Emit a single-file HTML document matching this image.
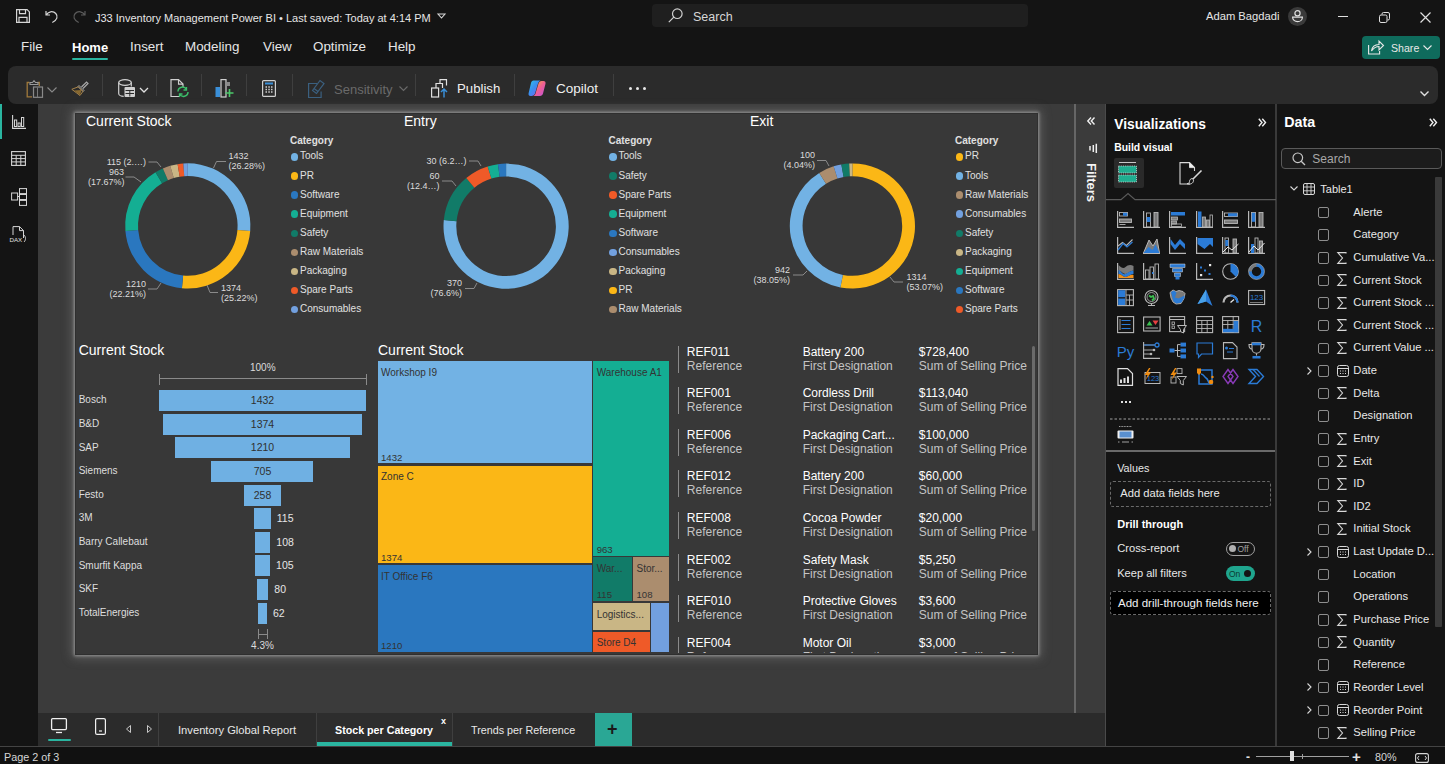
<!DOCTYPE html>
<html><head><meta charset="utf-8">
<style>
*{margin:0;padding:0;box-sizing:border-box}
html,body{width:1445px;height:764px;overflow:hidden;background:#141414;font-family:"Liberation Sans",sans-serif;color:#fff}
.a{position:absolute}
.t{position:absolute;white-space:nowrap;line-height:1}
svg{position:absolute;overflow:visible}
</style></head><body>
<div class="a" style="left:0px;top:0px;width:1445px;height:104px;background:#141414;"></div>
<svg style="left:16px;top:9px;" width="14" height="14" viewBox="0 0 14 14"><path d="M0.6 0.6h10.5l2.3 2.3v10.5h-12.8z M3.5 0.6v4h6v-4 M3 13.4v-5h8v5" fill="none" stroke="#d6d6d6" stroke-width="1.2"/></svg>
<svg style="left:45px;top:10px;" width="13" height="13" viewBox="0 0 13 13"><path d="M1 1v4h4 M1.2 5C3 1.5 8 0.5 10.8 3.5c2.5 2.7 1.5 6.5-3.5 9" fill="none" stroke="#d6d6d6" stroke-width="1.2"/></svg>
<svg style="left:73px;top:10px;" width="13" height="13" viewBox="0 0 13 13"><path d="M12 1v4h-4 M11.8 5C10 1.5 5 0.5 2.2 3.5c-2.5 2.7-1.5 6.5 3.5 9" fill="none" stroke="#5c5c5c" stroke-width="1.2"/></svg>
<div class="t" style="left:95px;top:13.3px;font-size:11px;color:#e6e6e6;font-weight:normal;">J33 Inventory Management Power BI &#8226; Last saved: Today at 4:14 PM</div>
<svg style="left:437px;top:13px;" width="9" height="6" viewBox="0 0 9 6"><path d="M1 1h7l-3.5 4z" fill="none" stroke="#d6d6d6" stroke-width="1.1"/></svg>
<div class="a" style="left:652px;top:4px;width:376px;height:23px;background:#1f1f1f;border-radius:4px"></div>
<svg style="left:668px;top:8px;" width="15" height="15" viewBox="0 0 15 15"><circle cx="9.3" cy="5.7" r="4.8" fill="none" stroke="#d0d0d0" stroke-width="1.2"/><path d="M5.8 9.2L0.8 14.2" stroke="#d0d0d0" stroke-width="1.2"/></svg>
<div class="t" style="left:693px;top:11.1px;font-size:12.5px;color:#d6d6d6;font-weight:normal;">Search</div>
<div class="t" style="left:1206px;top:10.9px;font-size:11.2px;color:#e6e6e6;font-weight:normal;">Adam Bagdadi</div>
<div class="a" style="left:1288px;top:7px;width:19px;height:19px;background:#3a3a3a;border-radius:50%"></div>
<svg style="left:1288px;top:7px;" width="19" height="19" viewBox="0 0 19 19"><circle cx="9.5" cy="6.2" r="2.6" fill="none" stroke="#e0e0e0" stroke-width="1.2"/><path d="M4.6 10.2h9.8c0 2.5-2.2 4.5-4.9 4.5s-4.9-2-4.9-4.5z" fill="none" stroke="#e0e0e0" stroke-width="1.2"/></svg>
<div class="a" style="left:1338px;top:16px;width:10px;height:1px;background:#e0e0e0;"></div>
<svg style="left:1379px;top:12px;" width="11" height="11" viewBox="0 0 11 11"><rect x="0.5" y="3" width="7.5" height="7.5" rx="1.5" fill="none" stroke="#e0e0e0"/><path d="M3 2.5v-0.5a1.5 1.5 0 0 1 1.5-1.5h4.5a1.5 1.5 0 0 1 1.5 1.5v4.5a1.5 1.5 0 0 1-1.5 1.5h-0.5" fill="none" stroke="#e0e0e0"/></svg>
<svg style="left:1420px;top:12px;" width="11" height="11" viewBox="0 0 11 11"><path d="M0.5 0.5l10 10M10.5 0.5l-10 10" stroke="#e0e0e0" stroke-width="1.2"/></svg>
<div class="t" style="left:21px;top:40.3px;font-size:13.4px;color:#e6e6e6;font-weight:normal;">File</div>
<div class="t" style="left:130px;top:40.3px;font-size:13.4px;color:#e6e6e6;font-weight:normal;">Insert</div>
<div class="t" style="left:185px;top:40.3px;font-size:13.4px;color:#e6e6e6;font-weight:normal;">Modeling</div>
<div class="t" style="left:263px;top:40.3px;font-size:13.4px;color:#e6e6e6;font-weight:normal;">View</div>
<div class="t" style="left:313px;top:40.3px;font-size:13.4px;color:#e6e6e6;font-weight:normal;">Optimize</div>
<div class="t" style="left:388px;top:40.3px;font-size:13.4px;color:#e6e6e6;font-weight:normal;">Help</div>
<div class="t" style="left:72px;top:40.5px;font-size:13px;color:#ffffff;font-weight:bold;">Home</div>
<div class="a" style="left:72px;top:58px;width:36px;height:2px;background:#2ab5a0;border-radius:1px"></div>
<div class="a" style="left:1362px;top:36px;width:78px;height:23px;background:#0f6b5c;border-radius:4px"></div>
<svg style="left:1368px;top:40px;" width="16" height="15" viewBox="0 0 16 15"><path d="M0.6 5v9h11v-3 M3.5 11c0.5-4 3.5-6.5 7.5-6.5v-3.5l4.5 4.5-4.5 4.5v-3.5c-3 0-5.5 1.5-7.5 4.5z" fill="none" stroke="#e8e8e8" stroke-width="1.1"/></svg>
<div class="t" style="left:1391px;top:42.5px;font-size:10.6px;color:#e8e8e8;font-weight:normal;">Share</div>
<svg style="left:1423px;top:45px;" width="9" height="5" viewBox="0 0 9 5"><path d="M0.5 0.5l4 4 4-4" fill="none" stroke="#e8e8e8" stroke-width="1.1"/></svg>
<div class="a" style="left:8px;top:66px;width:1430px;height:38px;background:#2b2b2b;border-radius:8px"></div>
<div class="a" style="left:102px;top:74px;width:1px;height:22px;background:#3f3f3f;"></div>
<div class="a" style="left:156px;top:74px;width:1px;height:22px;background:#3f3f3f;"></div>
<div class="a" style="left:201px;top:74px;width:1px;height:22px;background:#3f3f3f;"></div>
<div class="a" style="left:246px;top:74px;width:1px;height:22px;background:#3f3f3f;"></div>
<div class="a" style="left:292px;top:74px;width:1px;height:22px;background:#3f3f3f;"></div>
<div class="a" style="left:415px;top:74px;width:1px;height:22px;background:#3f3f3f;"></div>
<div class="a" style="left:514px;top:74px;width:1px;height:22px;background:#3f3f3f;"></div>
<div class="a" style="left:613px;top:74px;width:1px;height:22px;background:#3f3f3f;"></div>
<svg style="left:26px;top:80px;" width="18" height="18" viewBox="0 0 18 18"><path d="M3.5 2.5H1.2v14.3h4.8" fill="none" stroke="#a07a3c" stroke-width="1.3"/><path d="M11.5 2.5h1.8v3.5" fill="none" stroke="#a07a3c" stroke-width="1.3"/><path d="M4 4.5v-2h2.5l1.5-1.8 1.5 1.8h2.5v2z" fill="none" stroke="#9a9a9a" stroke-width="1.1"/><rect x="7.5" y="7" width="9" height="10.3" fill="none" stroke="#8a8a8a" stroke-width="1.2"/><path d="M11.5 7.5v9.5" stroke="#7a7a7a" stroke-width="1"/></svg>
<svg style="left:47px;top:87px;" width="10" height="6" viewBox="0 0 10 6"><path d="M0.5 0.5l4.5 4.5 4.5-4.5" fill="none" stroke="#8a8a8a" stroke-width="1.1"/></svg>
<svg style="left:71px;top:81px;" width="18" height="15" viewBox="0 0 18 15"><path d="M10.5 6L15.5 1l1.5 1.5-5 5" fill="none" stroke="#a8a8a8" stroke-width="1.2"/><path d="M8 4.5l5 5-1 1-5-5z" fill="none" stroke="#a8a8a8" stroke-width="1"/><path d="M0.8 8.3L7.3 5.8l4.7 4.5-3 4.2z" fill="none" stroke="#a8844a" stroke-width="1"/><path d="M3 9.5l7.5-0.5L9 14z" fill="#8a6a30"/></svg>
<svg style="left:118px;top:79px;" width="31" height="19" viewBox="0 0 31 19"><ellipse cx="7" cy="3.5" rx="6.3" ry="2.8" fill="none" stroke="#d0d0d0" stroke-width="1.2"/><path d="M0.7 3.5v11c0 1.6 2.5 2.8 5 2.8" fill="none" stroke="#d0d0d0" stroke-width="1.2"/><path d="M13.3 3.5v4" stroke="#d0d0d0" stroke-width="1.2"/><rect x="6.5" y="8" width="10.5" height="10" rx="1" fill="#d0d0d0"/><path d="M7.5 11.5h8.5M11.8 11.5v6M7.5 14.5h8.5" stroke="#2b2b2b" stroke-width="1"/><path d="M22 9l4 4 4-4" fill="none" stroke="#e0e0e0" stroke-width="1.3"/></svg>
<svg style="left:170px;top:79px;" width="19" height="19" viewBox="0 0 19 19"><path d="M9 17.5H1V0.6h7.5l4.5 4.5v3" fill="none" stroke="#d0d0d0" stroke-width="1.2"/><path d="M8.5 0.6v4.5h4.5" fill="none" stroke="#d0d0d0" stroke-width="1.1"/><path d="M8 12.5a4.5 4.5 0 0 1 8.5-2 M18 13a4.5 4.5 0 0 1-8.5 2" fill="none" stroke="#3bbf6a" stroke-width="1.5"/><path d="M16.5 8v3h-3 M9.5 18v-3h3" fill="none" stroke="#3bbf6a" stroke-width="1.3"/></svg>
<svg style="left:215px;top:79px;" width="19" height="19" viewBox="0 0 19 19"><rect x="0.5" y="8" width="4.5" height="10" fill="#3a8fd8"/><rect x="6" y="0.6" width="5" height="17.4" fill="none" stroke="#d0d0d0" stroke-width="1.2"/><rect x="12" y="3" width="3" height="4" fill="#8a8a8a"/><path d="M14.5 10v8M10.5 14h8" stroke="#4cc86a" stroke-width="1.6"/></svg>
<svg style="left:262px;top:80px;" width="14" height="17" viewBox="0 0 14 17"><rect x="0.6" y="0.6" width="12.8" height="15.8" rx="1" fill="none" stroke="#d0d0d0" stroke-width="1.2"/><rect x="3" y="2.5" width="8" height="2" fill="#3a8fd8"/><path d="M3.5 7h1.5M6.3 7h1.5M9 7h1.5M3.5 9.5h1.5M6.3 9.5h1.5M9 9.5h1.5M3.5 12h1.5M6.3 12h1.5M9 12h1.5" stroke="#d0d0d0" stroke-width="1.3"/></svg>
<svg style="left:308px;top:79px;" width="17" height="19" viewBox="0 0 17 19"><path d="M9 4.5H0.6v14h12.5v-6" fill="none" stroke="#3b6080" stroke-width="1.2"/><path d="M4.5 11.5l7.5-10 4 3-7.5 10z M6 9.5l4 3" fill="none" stroke="#3b6080" stroke-width="1.2"/></svg>
<div class="t" style="left:334px;top:82.5px;font-size:13px;color:#6a6a6a;font-weight:normal;">Sensitivity</div>
<svg style="left:399px;top:86px;" width="9" height="5" viewBox="0 0 9 5"><path d="M0.5 0.5l4 4 4-4" fill="none" stroke="#6a6a6a" stroke-width="1.1"/></svg>
<svg style="left:431px;top:79px;" width="18" height="19" viewBox="0 0 18 19"><rect x="0.6" y="9" width="7" height="9" fill="none" stroke="#e0e0e0" stroke-width="1.2"/><path d="M5 9V4.5h6.5V9 M9 4.5V0.6h6.5v6" fill="none" stroke="#e0e0e0" stroke-width="1.2"/><path d="M13 18.5v-8.5M10 13l3-3 3 3" fill="none" stroke="#3a8fd8" stroke-width="1.5"/></svg>
<div class="t" style="left:457px;top:82.4px;font-size:13.2px;color:#f0f0f0;font-weight:normal;">Publish</div>
<svg style="left:528px;top:79px;" width="19" height="19" viewBox="0 0 19 19"><defs><linearGradient id="cg1" x1="0" y1="0" x2="1" y2="1"><stop offset="0" stop-color="#2fc4e8"/><stop offset="0.45" stop-color="#3a8ef0"/><stop offset="1" stop-color="#8a5af0"/></linearGradient><linearGradient id="cg2" x1="0" y1="0" x2="1" y2="1"><stop offset="0" stop-color="#f0c030"/><stop offset="0.5" stop-color="#f06090"/><stop offset="1" stop-color="#c050e0"/></linearGradient></defs><path d="M5.5 1.5h7c-1.2 0.5-2 1.5-2.5 3L7 14.5c-0.5 1.5-1.8 2.5-3.5 2.5H2.5C1 17 0.2 15.8 0.6 14.3L3 4c0.4-1.5 1.2-2.5 2.5-2.5z" fill="url(#cg1)"/><path d="M13.5 2h2c1.5 0 2.4 1.2 2 2.7L15 14.5c-0.4 1.5-1.5 2.5-3 2.5H5c1.3-0.3 2.2-1.3 2.6-2.8L10.5 4.5C11 3 12 2 13.5 2z" fill="url(#cg2)"/></svg>
<div class="t" style="left:556px;top:82.2px;font-size:13.5px;color:#f0f0f0;font-weight:normal;">Copilot</div>
<div class="a" style="left:629px;top:86.5px;width:3px;height:3px;background:#e8e8e8;border-radius:50%"></div>
<div class="a" style="left:636px;top:86.5px;width:3px;height:3px;background:#e8e8e8;border-radius:50%"></div>
<div class="a" style="left:643px;top:86.5px;width:3px;height:3px;background:#e8e8e8;border-radius:50%"></div>
<svg style="left:1420px;top:91px;" width="9" height="6" viewBox="0 0 9 6"><path d="M0.5 0.5l4 4 4-4" fill="none" stroke="#e0e0e0" stroke-width="1.4"/></svg>
<div class="a" style="left:0px;top:104px;width:38px;height:642px;background:#141414;"></div>
<div class="a" style="left:0px;top:104px;width:2px;height:35px;background:#2ab5a0;"></div>
<svg style="left:12px;top:115px;" width="14" height="14" viewBox="0 0 14 14"><path d="M0.6 0v13.4H14" fill="none" stroke="#d6d6d6" stroke-width="1.1"/><rect x="2.5" y="5" width="2.2" height="6.5" fill="none" stroke="#d6d6d6" stroke-width="1"/><rect x="6" y="8" width="2.2" height="3.5" fill="none" stroke="#d6d6d6" stroke-width="1"/><rect x="9.5" y="2.5" width="2.2" height="9" fill="none" stroke="#d6d6d6" stroke-width="1"/></svg>
<svg style="left:11px;top:151px;" width="15" height="15" viewBox="0 0 15 15"><rect x="0.6" y="0.6" width="13.8" height="13.8" fill="none" stroke="#d6d6d6" stroke-width="1.1"/><path d="M0.6 4.3h13.8M0.6 7.6h13.8M0.6 10.9h13.8M5.2 4.3v10.1M9.8 4.3v10.1" stroke="#d6d6d6" stroke-width="1"/></svg>
<svg style="left:11px;top:188px;" width="16" height="18" viewBox="0 0 16 18"><rect x="0.6" y="5" width="6" height="7" fill="none" stroke="#d6d6d6" stroke-width="1"/><rect x="8.5" y="0.6" width="7" height="5" fill="none" stroke="#d6d6d6" stroke-width="1"/><rect x="8.5" y="6.5" width="7" height="5" fill="none" stroke="#d6d6d6" stroke-width="1"/><rect x="8.5" y="12.4" width="7" height="5" fill="none" stroke="#d6d6d6" stroke-width="1"/><path d="M6.6 8.5h2" stroke="#d6d6d6"/></svg>
<svg style="left:10px;top:226px;" width="17" height="17" viewBox="0 0 17 17"><path d="M3 9V0.6h6.5l4 4V12" fill="none" stroke="#d6d6d6" stroke-width="1"/><path d="M9.5 0.6v4h4" fill="none" stroke="#d6d6d6" stroke-width="1"/><path d="M14 9c2 2 2 5 0 7" fill="none" stroke="#d6d6d6" stroke-width="1"/></svg>
<div class="t" style="left:9.5px;top:236.9px;font-size:6.2px;color:#e0e0e0;font-weight:normal;">DAX</div>
<div class="a" style="left:38px;top:104px;width:1036px;height:609px;background:#3b3b3b;"></div>
<div class="a" style="left:75px;top:112.5px;width:963px;height:542.5px;background:#383838;border:1px solid #2f2f2f;box-shadow:0 0 3px 1px rgba(200,200,200,0.55),0 0 10px 3px rgba(160,160,160,0.35)"></div>
<div class="a" style="left:1074px;top:104px;width:2px;height:609px;background:#666666;"></div>
<div class="a" style="left:1076px;top:104px;width:29px;height:609px;background:#3b3b3b;"></div>
<div class="a" style="left:1105px;top:104px;width:1px;height:642px;background:#4a4a4a;"></div>
<svg style="left:1087px;top:117px;" width="8" height="8" viewBox="0 0 8 8"><path d="M4 0.5L0.8 4 4 7.5M7.5 0.5L4.3 4 7.5 7.5" fill="none" stroke="#f0f0f0" stroke-width="1.4"/></svg>
<svg style="left:1089px;top:144px;" width="9" height="9" viewBox="0 0 9 9"><path d="M1 2v4.6M4.3 0.9v7M7.3 -0.2v9.2" stroke="#f0f0f0" stroke-width="1.5"/></svg>
<div class="t" style="left:1091px;top:175.5px;font-size:13px;color:#f5f5f5;font-weight:bold;transform:translate(-50%,0) rotate(90deg);transform-origin:50% 50%">Filters</div>
<div class="a" style="left:38px;top:713px;width:1067px;height:33px;background:#2b2b2b;"></div>
<svg style="left:51px;top:718px;" width="16" height="16" viewBox="0 0 16 16"><rect x="0.6" y="0.6" width="14.8" height="11" rx="1" fill="none" stroke="#f0f0f0" stroke-width="1.3"/><path d="M5 14.5h6" stroke="#f0f0f0" stroke-width="1.3"/></svg>
<div class="a" style="left:48px;top:739px;width:23px;height:2px;background:#2ab5a0;border-radius:1px"></div>
<svg style="left:95px;top:718px;" width="11" height="17" viewBox="0 0 11 17"><rect x="0.6" y="0.6" width="9.8" height="15.8" rx="1.5" fill="none" stroke="#f0f0f0" stroke-width="1.2"/><path d="M4 13h3" stroke="#f0f0f0" stroke-width="1.2"/></svg>
<svg style="left:126px;top:725px;" width="5" height="8" viewBox="0 0 5 8"><path d="M4.5 0.5L0.5 4l4 3.5z" fill="none" stroke="#c8c8c8" stroke-width="1"/></svg>
<svg style="left:147px;top:725px;" width="5" height="8" viewBox="0 0 5 8"><path d="M0.5 0.5L4.5 4l-4 3.5z" fill="none" stroke="#c8c8c8" stroke-width="1"/></svg>
<div class="a" style="left:158px;top:713px;width:1px;height:33px;background:#3f3f3f;"></div>
<div class="t" style="left:178px;top:724.6px;font-size:11.2px;color:#e8e8e8;font-weight:normal;">Inventory Global Report</div>
<div class="a" style="left:316px;top:713px;width:1px;height:33px;background:#3f3f3f;"></div>
<div class="a" style="left:317px;top:713px;width:135px;height:33px;background:#2d2d2d;"></div>
<div class="t" style="left:335px;top:724.9px;font-size:10.7px;color:#ffffff;font-weight:bold;">Stock per Category</div>
<div class="t" style="left:441px;top:716.5px;font-size:9px;color:#ffffff;font-weight:bold;">x</div>
<div class="a" style="left:317px;top:742px;width:135px;height:4px;background:#2ab5a0;"></div>
<div class="a" style="left:452px;top:713px;width:1px;height:33px;background:#3f3f3f;"></div>
<div class="t" style="left:471px;top:724.8px;font-size:10.75px;color:#e8e8e8;font-weight:normal;">Trends per Reference</div>
<div class="a" style="left:595px;top:713px;width:37px;height:33px;background:#2aa795;"></div>
<div class="t" style="left:607px;top:719.5px;font-size:18px;color:#1a1a1a;font-weight:bold;">+</div>
<div class="t" style="left:86px;top:114.0px;font-size:14px;color:#ffffff;font-weight:normal;">Current Stock</div>
<svg style="left:0;top:0" width="1445" height="764" viewBox="0 0 1445 764"><path d="M187.80 163.30A62.6 62.6 0 0 1 250.20 230.93L237.44 229.90A49.8 49.8 0 0 0 187.80 176.10Z" fill="#72b2e4"/><path d="M250.20 230.93A62.6 62.6 0 0 1 181.93 288.22L183.13 275.48A49.8 49.8 0 0 0 237.44 229.90Z" fill="#fbb716"/><path d="M181.93 288.22A62.6 62.6 0 0 1 125.41 231.00L138.17 229.96A49.8 49.8 0 0 0 183.13 275.48Z" fill="#2a77bf"/><path d="M125.41 231.00A62.6 62.6 0 0 1 155.51 172.27L162.11 183.24A49.8 49.8 0 0 0 138.17 229.96Z" fill="#14ae93"/><path d="M155.51 172.27A62.6 62.6 0 0 1 162.88 168.47L167.98 180.21A49.8 49.8 0 0 0 162.11 183.24Z" fill="#117b68"/><path d="M162.88 168.47A62.6 62.6 0 0 1 170.21 165.82L173.81 178.11A49.8 49.8 0 0 0 167.98 180.21Z" fill="#ab8d6e"/><path d="M170.21 165.82A62.6 62.6 0 0 1 177.60 164.14L179.68 176.77A49.8 49.8 0 0 0 173.81 178.11Z" fill="#c9b685"/><path d="M177.60 164.14A62.6 62.6 0 0 1 183.33 163.46L184.24 176.23A49.8 49.8 0 0 0 179.68 176.77Z" fill="#ef5a28"/><path d="M183.33 163.46A62.6 62.6 0 0 1 187.80 163.30L187.80 176.10A49.8 49.8 0 0 0 184.24 176.23Z" fill="#72a0df"/></svg>
<div class="t" style="left:290px;top:135.6px;font-size:10px;color:#e0e0e0;font-weight:bold;">Category</div>
<div class="a" style="left:290.7px;top:153.1px;width:7.6px;height:7.6px;background:#72b2e4;border-radius:50%"></div>
<div class="t" style="left:300px;top:151.4px;font-size:10px;color:#e0e0e0;font-weight:normal;">Tools</div>
<div class="a" style="left:290.7px;top:172.2px;width:7.6px;height:7.6px;background:#fbb716;border-radius:50%"></div>
<div class="t" style="left:300px;top:170.5px;font-size:10px;color:#e0e0e0;font-weight:normal;">PR</div>
<div class="a" style="left:290.7px;top:191.3px;width:7.6px;height:7.6px;background:#2a77bf;border-radius:50%"></div>
<div class="t" style="left:300px;top:189.6px;font-size:10px;color:#e0e0e0;font-weight:normal;">Software</div>
<div class="a" style="left:290.7px;top:210.4px;width:7.6px;height:7.6px;background:#14ae93;border-radius:50%"></div>
<div class="t" style="left:300px;top:208.7px;font-size:10px;color:#e0e0e0;font-weight:normal;">Equipment</div>
<div class="a" style="left:290.7px;top:229.5px;width:7.6px;height:7.6px;background:#117b68;border-radius:50%"></div>
<div class="t" style="left:300px;top:227.8px;font-size:10px;color:#e0e0e0;font-weight:normal;">Safety</div>
<div class="a" style="left:290.7px;top:248.6px;width:7.6px;height:7.6px;background:#ab8d6e;border-radius:50%"></div>
<div class="t" style="left:300px;top:246.9px;font-size:10px;color:#e0e0e0;font-weight:normal;">Raw Materials</div>
<div class="a" style="left:290.7px;top:267.7px;width:7.6px;height:7.6px;background:#c9b685;border-radius:50%"></div>
<div class="t" style="left:300px;top:266.0px;font-size:10px;color:#e0e0e0;font-weight:normal;">Packaging</div>
<div class="a" style="left:290.7px;top:286.8px;width:7.6px;height:7.6px;background:#ef5a28;border-radius:50%"></div>
<div class="t" style="left:300px;top:285.1px;font-size:10px;color:#e0e0e0;font-weight:normal;">Spare Parts</div>
<div class="a" style="left:290.7px;top:305.90000000000003px;width:7.6px;height:7.6px;background:#72a0df;border-radius:50%"></div>
<div class="t" style="left:300px;top:304.2px;font-size:10px;color:#e0e0e0;font-weight:normal;">Consumables</div>
<div class="t" style="left:228.5px;top:152.0px;font-size:9px;color:#dcdcdc;font-weight:normal;">1432</div>
<div class="t" style="left:228.5px;top:162.0px;font-size:9px;color:#dcdcdc;font-weight:normal;">(26.28%)</div>
<svg style="left:0;top:0" width="1445" height="764"><path d="M213.5 168 L216.5 161.5 L226 161.5" fill="none" stroke="#8a8a8a" stroke-width="1"/></svg>
<div class="t" style="right:1299px;top:158.2px;font-size:9px;color:#dcdcdc;font-weight:normal;text-align:right;">115 (2.…)</div>
<svg style="left:0;top:0" width="1445" height="764"><path d="M148.5 162 L157 162 L161 167" fill="none" stroke="#8a8a8a" stroke-width="1"/></svg>
<div class="t" style="right:1321px;top:168.0px;font-size:9px;color:#dcdcdc;font-weight:normal;text-align:right;">963</div>
<div class="t" style="right:1320.5px;top:177.8px;font-size:9px;color:#dcdcdc;font-weight:normal;text-align:right;">(17.67%)</div>
<svg style="left:0;top:0" width="1445" height="764"><path d="M125.5 177 L134 177 L141 182" fill="none" stroke="#8a8a8a" stroke-width="1"/></svg>
<div class="t" style="right:1299px;top:280.0px;font-size:9px;color:#dcdcdc;font-weight:normal;text-align:right;">1210</div>
<div class="t" style="right:1299px;top:290.0px;font-size:9px;color:#dcdcdc;font-weight:normal;text-align:right;">(22.21%)</div>
<svg style="left:0;top:0" width="1445" height="764"><path d="M148 289 L157 289 L161 283" fill="none" stroke="#8a8a8a" stroke-width="1"/></svg>
<div class="t" style="left:221px;top:283.5px;font-size:9px;color:#dcdcdc;font-weight:normal;">1374</div>
<div class="t" style="left:221px;top:293.5px;font-size:9px;color:#dcdcdc;font-weight:normal;">(25.22%)</div>
<svg style="left:0;top:0" width="1445" height="764"><path d="M207 285 L210 292.5 L218 292.5" fill="none" stroke="#8a8a8a" stroke-width="1"/></svg>
<div class="t" style="left:404px;top:114.0px;font-size:14px;color:#ffffff;font-weight:normal;">Entry</div>
<svg style="left:0;top:0" width="1445" height="764" viewBox="0 0 1445 764"><path d="M506.10 163.60A62.6 62.6 0 1 1 443.82 219.90L456.55 221.19A49.8 49.8 0 1 0 506.10 176.40Z" fill="#72b2e4"/><path d="M443.82 219.90A62.6 62.6 0 0 1 466.28 177.90L474.42 187.77A49.8 49.8 0 0 0 456.55 221.19Z" fill="#117b68"/><path d="M466.28 177.90A62.6 62.6 0 0 1 487.65 166.38L491.42 178.61A49.8 49.8 0 0 0 474.42 187.77Z" fill="#ef5a28"/><path d="M487.65 166.38A62.6 62.6 0 0 1 497.98 164.13L499.64 176.82A49.8 49.8 0 0 0 491.42 178.61Z" fill="#14ae93"/><path d="M497.98 164.13A62.6 62.6 0 0 1 506.10 163.60L506.10 176.40A49.8 49.8 0 0 0 499.64 176.82Z" fill="#2a77bf"/></svg>
<div class="t" style="left:608.5px;top:135.6px;font-size:10px;color:#e0e0e0;font-weight:bold;">Category</div>
<div class="a" style="left:609.2px;top:153.1px;width:7.6px;height:7.6px;background:#72b2e4;border-radius:50%"></div>
<div class="t" style="left:618.5px;top:151.4px;font-size:10px;color:#e0e0e0;font-weight:normal;">Tools</div>
<div class="a" style="left:609.2px;top:172.2px;width:7.6px;height:7.6px;background:#117b68;border-radius:50%"></div>
<div class="t" style="left:618.5px;top:170.5px;font-size:10px;color:#e0e0e0;font-weight:normal;">Safety</div>
<div class="a" style="left:609.2px;top:191.3px;width:7.6px;height:7.6px;background:#ef5a28;border-radius:50%"></div>
<div class="t" style="left:618.5px;top:189.6px;font-size:10px;color:#e0e0e0;font-weight:normal;">Spare Parts</div>
<div class="a" style="left:609.2px;top:210.4px;width:7.6px;height:7.6px;background:#14ae93;border-radius:50%"></div>
<div class="t" style="left:618.5px;top:208.7px;font-size:10px;color:#e0e0e0;font-weight:normal;">Equipment</div>
<div class="a" style="left:609.2px;top:229.5px;width:7.6px;height:7.6px;background:#2a77bf;border-radius:50%"></div>
<div class="t" style="left:618.5px;top:227.8px;font-size:10px;color:#e0e0e0;font-weight:normal;">Software</div>
<div class="a" style="left:609.2px;top:248.6px;width:7.6px;height:7.6px;background:#72a0df;border-radius:50%"></div>
<div class="t" style="left:618.5px;top:246.9px;font-size:10px;color:#e0e0e0;font-weight:normal;">Consumables</div>
<div class="a" style="left:609.2px;top:267.7px;width:7.6px;height:7.6px;background:#c9b685;border-radius:50%"></div>
<div class="t" style="left:618.5px;top:266.0px;font-size:10px;color:#e0e0e0;font-weight:normal;">Packaging</div>
<div class="a" style="left:609.2px;top:286.8px;width:7.6px;height:7.6px;background:#fbb716;border-radius:50%"></div>
<div class="t" style="left:618.5px;top:285.1px;font-size:10px;color:#e0e0e0;font-weight:normal;">PR</div>
<div class="a" style="left:609.2px;top:305.90000000000003px;width:7.6px;height:7.6px;background:#ab8d6e;border-radius:50%"></div>
<div class="t" style="left:618.5px;top:304.2px;font-size:10px;color:#e0e0e0;font-weight:normal;">Raw Materials</div>
<div class="t" style="right:978.5px;top:156.8px;font-size:9px;color:#dcdcdc;font-weight:normal;text-align:right;">30 (6.2…)</div>
<svg style="left:0;top:0" width="1445" height="764"><path d="M469 161 L478 161 L481 166" fill="none" stroke="#8a8a8a" stroke-width="1"/></svg>
<div class="t" style="right:1005.5px;top:171.5px;font-size:9px;color:#dcdcdc;font-weight:normal;text-align:right;">60</div>
<div class="t" style="right:1005.5px;top:182.2px;font-size:9px;color:#dcdcdc;font-weight:normal;text-align:right;">(12.4…)</div>
<svg style="left:0;top:0" width="1445" height="764"><path d="M442 181 L452 181 L456 186" fill="none" stroke="#8a8a8a" stroke-width="1"/></svg>
<div class="t" style="right:983px;top:279.2px;font-size:9px;color:#dcdcdc;font-weight:normal;text-align:right;">370</div>
<div class="t" style="right:983px;top:289.2px;font-size:9px;color:#dcdcdc;font-weight:normal;text-align:right;">(76.6%)</div>
<svg style="left:0;top:0" width="1445" height="764"><path d="M465 288.5 L474 288.5 L477 283" fill="none" stroke="#8a8a8a" stroke-width="1"/></svg>
<div class="t" style="left:750px;top:114.0px;font-size:14px;color:#ffffff;font-weight:normal;">Exit</div>
<svg style="left:0;top:0" width="1445" height="764" viewBox="0 0 1445 764"><path d="M852.40 163.40A62.6 62.6 0 1 1 840.40 287.44L842.85 274.88A49.8 49.8 0 1 0 852.40 176.20Z" fill="#fbb716"/><path d="M840.40 287.44A62.6 62.6 0 0 1 819.24 172.90L826.02 183.76A49.8 49.8 0 0 0 842.85 274.88Z" fill="#72b2e4"/><path d="M819.24 172.90A62.6 62.6 0 0 1 833.63 166.28L837.47 178.49A49.8 49.8 0 0 0 826.02 183.76Z" fill="#ab8d6e"/><path d="M833.63 166.28A62.6 62.6 0 0 1 841.34 164.39L843.60 176.98A49.8 49.8 0 0 0 837.47 178.49Z" fill="#72a0df"/><path d="M841.34 164.39A62.6 62.6 0 0 1 849.22 163.48L849.87 176.26A49.8 49.8 0 0 0 843.60 176.98Z" fill="#117b68"/><path d="M849.22 163.48A62.6 62.6 0 0 1 852.40 163.40L852.40 176.20A49.8 49.8 0 0 0 849.87 176.26Z" fill="#c9b685"/></svg>
<div class="t" style="left:955px;top:135.6px;font-size:10px;color:#e0e0e0;font-weight:bold;">Category</div>
<div class="a" style="left:955.7px;top:153.1px;width:7.6px;height:7.6px;background:#fbb716;border-radius:50%"></div>
<div class="t" style="left:965px;top:151.4px;font-size:10px;color:#e0e0e0;font-weight:normal;">PR</div>
<div class="a" style="left:955.7px;top:172.2px;width:7.6px;height:7.6px;background:#72b2e4;border-radius:50%"></div>
<div class="t" style="left:965px;top:170.5px;font-size:10px;color:#e0e0e0;font-weight:normal;">Tools</div>
<div class="a" style="left:955.7px;top:191.3px;width:7.6px;height:7.6px;background:#ab8d6e;border-radius:50%"></div>
<div class="t" style="left:965px;top:189.6px;font-size:10px;color:#e0e0e0;font-weight:normal;">Raw Materials</div>
<div class="a" style="left:955.7px;top:210.4px;width:7.6px;height:7.6px;background:#72a0df;border-radius:50%"></div>
<div class="t" style="left:965px;top:208.7px;font-size:10px;color:#e0e0e0;font-weight:normal;">Consumables</div>
<div class="a" style="left:955.7px;top:229.5px;width:7.6px;height:7.6px;background:#117b68;border-radius:50%"></div>
<div class="t" style="left:965px;top:227.8px;font-size:10px;color:#e0e0e0;font-weight:normal;">Safety</div>
<div class="a" style="left:955.7px;top:248.6px;width:7.6px;height:7.6px;background:#c9b685;border-radius:50%"></div>
<div class="t" style="left:965px;top:246.9px;font-size:10px;color:#e0e0e0;font-weight:normal;">Packaging</div>
<div class="a" style="left:955.7px;top:267.7px;width:7.6px;height:7.6px;background:#14ae93;border-radius:50%"></div>
<div class="t" style="left:965px;top:266.0px;font-size:10px;color:#e0e0e0;font-weight:normal;">Equipment</div>
<div class="a" style="left:955.7px;top:286.8px;width:7.6px;height:7.6px;background:#2a77bf;border-radius:50%"></div>
<div class="t" style="left:965px;top:285.1px;font-size:10px;color:#e0e0e0;font-weight:normal;">Software</div>
<div class="a" style="left:955.7px;top:305.90000000000003px;width:7.6px;height:7.6px;background:#ef5a28;border-radius:50%"></div>
<div class="t" style="left:965px;top:304.2px;font-size:10px;color:#e0e0e0;font-weight:normal;">Spare Parts</div>
<div class="t" style="right:630px;top:150.8px;font-size:9px;color:#dcdcdc;font-weight:normal;text-align:right;">100</div>
<div class="t" style="right:630px;top:161.0px;font-size:9px;color:#dcdcdc;font-weight:normal;text-align:right;">(4.04%)</div>
<svg style="left:0;top:0" width="1445" height="764"><path d="M817 160.5 L826 160.5 L829 166" fill="none" stroke="#8a8a8a" stroke-width="1"/></svg>
<div class="t" style="right:655px;top:265.5px;font-size:9px;color:#dcdcdc;font-weight:normal;text-align:right;">942</div>
<div class="t" style="right:655px;top:276.1px;font-size:9px;color:#dcdcdc;font-weight:normal;text-align:right;">(38.05%)</div>
<svg style="left:0;top:0" width="1445" height="764"><path d="M793 275 L803 275 L807 271" fill="none" stroke="#8a8a8a" stroke-width="1"/></svg>
<div class="t" style="left:906.5px;top:272.5px;font-size:9px;color:#dcdcdc;font-weight:normal;">1314</div>
<div class="t" style="left:906.5px;top:282.7px;font-size:9px;color:#dcdcdc;font-weight:normal;">(53.07%)</div>
<svg style="left:0;top:0" width="1445" height="764"><path d="M890 277 L894 282 L903 282" fill="none" stroke="#8a8a8a" stroke-width="1"/></svg>
<div class="t" style="left:78.7px;top:343.0px;font-size:14px;color:#ffffff;font-weight:normal;">Current Stock</div>
<div class="t" style="left:250px;top:363.0px;font-size:10px;color:#dcdcdc;font-weight:normal;width:25px;text-align:center">100%</div>
<div class="a" style="left:158.5px;top:378.3px;width:208px;height:1.2px;background:#8a8a8a;"></div>
<div class="a" style="left:158.5px;top:373.5px;width:1.2px;height:11px;background:#8a8a8a;"></div>
<div class="a" style="left:365.5px;top:373.5px;width:1.2px;height:11px;background:#8a8a8a;"></div>
<div class="a" style="left:158.8px;top:390.2px;width:207.4px;height:21px;background:#6fb0e3;"></div>
<div class="t" style="left:78.7px;top:395.4px;font-size:10px;color:#dedede;font-weight:normal;">Bosch</div>
<div class="t" style="left:232.5px;top:395.1px;width:60px;text-align:center;font-size:10.5px;color:#303030">1432</div>
<div class="a" style="left:163.0px;top:413.8px;width:199.0px;height:21px;background:#6fb0e3;"></div>
<div class="t" style="left:78.7px;top:419.0px;font-size:10px;color:#dedede;font-weight:normal;">B&D</div>
<div class="t" style="left:232.5px;top:418.8px;width:60px;text-align:center;font-size:10.5px;color:#303030">1374</div>
<div class="a" style="left:174.9px;top:437.4px;width:175.2px;height:21px;background:#6fb0e3;"></div>
<div class="t" style="left:78.7px;top:442.6px;font-size:10px;color:#dedede;font-weight:normal;">SAP</div>
<div class="t" style="left:232.5px;top:442.3px;width:60px;text-align:center;font-size:10.5px;color:#303030">1210</div>
<div class="a" style="left:211.4px;top:461.0px;width:102.1px;height:21px;background:#6fb0e3;"></div>
<div class="t" style="left:78.7px;top:466.2px;font-size:10px;color:#dedede;font-weight:normal;">Siemens</div>
<div class="t" style="left:232.5px;top:465.9px;width:60px;text-align:center;font-size:10.5px;color:#303030">705</div>
<div class="a" style="left:243.8px;top:484.6px;width:37.4px;height:21px;background:#6fb0e3;"></div>
<div class="t" style="left:78.7px;top:489.8px;font-size:10px;color:#dedede;font-weight:normal;">Festo</div>
<div class="t" style="left:232.5px;top:489.6px;width:60px;text-align:center;font-size:10.5px;color:#303030">258</div>
<div class="a" style="left:254.2px;top:508.2px;width:16.7px;height:21px;background:#6fb0e3;"></div>
<div class="t" style="left:78.7px;top:513.4px;font-size:10px;color:#dedede;font-weight:normal;">3M</div>
<div class="t" style="left:276.8px;top:513.1px;font-size:10.5px;color:#e6e6e6;font-weight:normal;">115</div>
<div class="a" style="left:254.7px;top:531.8px;width:15.6px;height:21px;background:#6fb0e3;"></div>
<div class="t" style="left:78.7px;top:537.0px;font-size:10px;color:#dedede;font-weight:normal;">Barry Callebaut</div>
<div class="t" style="left:276.3px;top:536.8px;font-size:10.5px;color:#e6e6e6;font-weight:normal;">108</div>
<div class="a" style="left:254.9px;top:555.4px;width:15.2px;height:21px;background:#6fb0e3;"></div>
<div class="t" style="left:78.7px;top:560.6px;font-size:10px;color:#dedede;font-weight:normal;">Smurfit Kappa</div>
<div class="t" style="left:276.1px;top:560.4px;font-size:10.5px;color:#e6e6e6;font-weight:normal;">105</div>
<div class="a" style="left:256.7px;top:579.0px;width:11.6px;height:21px;background:#6fb0e3;"></div>
<div class="t" style="left:78.7px;top:584.2px;font-size:10px;color:#dedede;font-weight:normal;">SKF</div>
<div class="t" style="left:274.3px;top:584.0px;font-size:10.5px;color:#e6e6e6;font-weight:normal;">80</div>
<div class="a" style="left:258.0px;top:602.6px;width:9.0px;height:21px;background:#6fb0e3;"></div>
<div class="t" style="left:78.7px;top:607.8px;font-size:10px;color:#dedede;font-weight:normal;">TotalEnergies</div>
<div class="t" style="left:273.0px;top:607.6px;font-size:10.5px;color:#e6e6e6;font-weight:normal;">62</div>
<div class="a" style="left:257.5px;top:629px;width:1px;height:10px;background:#8a8a8a;"></div>
<div class="a" style="left:266.5px;top:629px;width:1px;height:10px;background:#8a8a8a;"></div>
<div class="a" style="left:257.5px;top:634px;width:10px;height:1px;background:#8a8a8a;"></div>
<div class="t" style="left:242.5px;top:640.5px;width:40px;text-align:center;font-size:10px;color:#dcdcdc">4.3%</div>
<div class="t" style="left:378px;top:343.0px;font-size:14px;color:#ffffff;font-weight:normal;">Current Stock</div>
<div class="a" style="left:377.5px;top:361.2px;width:214px;height:102.3px;background:#72b2e4;"></div>
<div class="t" style="left:381.0px;top:368.0px;font-size:10px;color:#333333;font-weight:normal;">Workshop I9</div>
<div class="t" style="left:381.0px;top:452.7px;font-size:9.6px;color:#333333;font-weight:normal;">1432</div>
<div class="a" style="left:377.5px;top:465.6px;width:214px;height:97.9px;background:#fbb716;"></div>
<div class="t" style="left:381.0px;top:472.4px;font-size:10px;color:#333333;font-weight:normal;">Zone C</div>
<div class="t" style="left:381.0px;top:552.7px;font-size:9.6px;color:#333333;font-weight:normal;">1374</div>
<div class="a" style="left:377.5px;top:565px;width:214px;height:86.8px;background:#2a77bf;"></div>
<div class="t" style="left:381.0px;top:571.8px;font-size:10px;color:#333333;font-weight:normal;">IT Office F6</div>
<div class="t" style="left:381.0px;top:641.0px;font-size:9.6px;color:#333333;font-weight:normal;">1210</div>
<div class="a" style="left:593.2px;top:361px;width:76px;height:194.7px;background:#14ae93;"></div>
<div class="t" style="left:596.7px;top:367.8px;font-size:10px;color:#333333;font-weight:normal;">Warehouse A1</div>
<div class="t" style="left:596.7px;top:544.9px;font-size:9.6px;color:#333333;font-weight:normal;">963</div>
<div class="a" style="left:593.2px;top:557.2px;width:38.6px;height:43.8px;background:#117b68;"></div>
<div class="t" style="left:596.7px;top:564.0px;font-size:10px;color:#333333;font-weight:normal;">War...</div>
<div class="t" style="left:596.7px;top:590.2px;font-size:9.6px;color:#333333;font-weight:normal;">115</div>
<div class="a" style="left:633px;top:557.2px;width:36.2px;height:43.8px;background:#ab8d6e;"></div>
<div class="t" style="left:636.5px;top:564.0px;font-size:10px;color:#333333;font-weight:normal;">Stor...</div>
<div class="t" style="left:636.5px;top:590.2px;font-size:9.6px;color:#333333;font-weight:normal;">108</div>
<div class="a" style="left:593.2px;top:602.8px;width:56.8px;height:27.4px;background:#c9b685;"></div>
<div class="t" style="left:596.7px;top:609.6px;font-size:10px;color:#333333;font-weight:normal;">Logistics...</div>
<div class="a" style="left:593.2px;top:631.5px;width:56.8px;height:20.3px;background:#ef5a28;"></div>
<div class="t" style="left:596.7px;top:638.3px;font-size:10px;color:#333333;font-weight:normal;">Store D4</div>
<div class="a" style="left:651px;top:602.8px;width:18.2px;height:49px;background:#72a0df;"></div>
<div class="a" style="left:670px;top:340px;width:368px;height:312.5px;overflow:hidden">
<div class="a" style="left:8px;top:5.5px;width:1px;height:27px;background:#8a8a8a"></div>
<div class="t" style="left:16.8px;top:5.5px;font-size:12px;color:#ffffff">REF011</div>
<div class="t" style="left:16.8px;top:19.5px;font-size:12px;color:#c4c4c4">Reference</div>
<div class="t" style="left:132.7px;top:5.5px;font-size:12px;color:#ffffff">Battery 200</div>
<div class="t" style="left:132.7px;top:19.5px;font-size:12px;color:#c4c4c4">First Designation</div>
<div class="t" style="left:248.8px;top:5.5px;font-size:12px;color:#ffffff">$728,400</div>
<div class="t" style="left:248.8px;top:19.5px;font-size:12px;color:#c4c4c4">Sum of Selling Price</div>
<div class="a" style="left:8px;top:47.1px;width:1px;height:27px;background:#8a8a8a"></div>
<div class="t" style="left:16.8px;top:47.1px;font-size:12px;color:#ffffff">REF001</div>
<div class="t" style="left:16.8px;top:61.1px;font-size:12px;color:#c4c4c4">Reference</div>
<div class="t" style="left:132.7px;top:47.1px;font-size:12px;color:#ffffff">Cordless Drill</div>
<div class="t" style="left:132.7px;top:61.1px;font-size:12px;color:#c4c4c4">First Designation</div>
<div class="t" style="left:248.8px;top:47.1px;font-size:12px;color:#ffffff">$113,040</div>
<div class="t" style="left:248.8px;top:61.1px;font-size:12px;color:#c4c4c4">Sum of Selling Price</div>
<div class="a" style="left:8px;top:88.8px;width:1px;height:27px;background:#8a8a8a"></div>
<div class="t" style="left:16.8px;top:88.8px;font-size:12px;color:#ffffff">REF006</div>
<div class="t" style="left:16.8px;top:102.8px;font-size:12px;color:#c4c4c4">Reference</div>
<div class="t" style="left:132.7px;top:88.8px;font-size:12px;color:#ffffff">Packaging Cart...</div>
<div class="t" style="left:132.7px;top:102.8px;font-size:12px;color:#c4c4c4">First Designation</div>
<div class="t" style="left:248.8px;top:88.8px;font-size:12px;color:#ffffff">$100,000</div>
<div class="t" style="left:248.8px;top:102.8px;font-size:12px;color:#c4c4c4">Sum of Selling Price</div>
<div class="a" style="left:8px;top:130.4px;width:1px;height:27px;background:#8a8a8a"></div>
<div class="t" style="left:16.8px;top:130.4px;font-size:12px;color:#ffffff">REF012</div>
<div class="t" style="left:16.8px;top:144.4px;font-size:12px;color:#c4c4c4">Reference</div>
<div class="t" style="left:132.7px;top:130.4px;font-size:12px;color:#ffffff">Battery 200</div>
<div class="t" style="left:132.7px;top:144.4px;font-size:12px;color:#c4c4c4">First Designation</div>
<div class="t" style="left:248.8px;top:130.4px;font-size:12px;color:#ffffff">$60,000</div>
<div class="t" style="left:248.8px;top:144.4px;font-size:12px;color:#c4c4c4">Sum of Selling Price</div>
<div class="a" style="left:8px;top:172.1px;width:1px;height:27px;background:#8a8a8a"></div>
<div class="t" style="left:16.8px;top:172.1px;font-size:12px;color:#ffffff">REF008</div>
<div class="t" style="left:16.8px;top:186.1px;font-size:12px;color:#c4c4c4">Reference</div>
<div class="t" style="left:132.7px;top:172.1px;font-size:12px;color:#ffffff">Cocoa Powder</div>
<div class="t" style="left:132.7px;top:186.1px;font-size:12px;color:#c4c4c4">First Designation</div>
<div class="t" style="left:248.8px;top:172.1px;font-size:12px;color:#ffffff">$20,000</div>
<div class="t" style="left:248.8px;top:186.1px;font-size:12px;color:#c4c4c4">Sum of Selling Price</div>
<div class="a" style="left:8px;top:213.8px;width:1px;height:27px;background:#8a8a8a"></div>
<div class="t" style="left:16.8px;top:213.8px;font-size:12px;color:#ffffff">REF002</div>
<div class="t" style="left:16.8px;top:227.8px;font-size:12px;color:#c4c4c4">Reference</div>
<div class="t" style="left:132.7px;top:213.8px;font-size:12px;color:#ffffff">Safety Mask</div>
<div class="t" style="left:132.7px;top:227.8px;font-size:12px;color:#c4c4c4">First Designation</div>
<div class="t" style="left:248.8px;top:213.8px;font-size:12px;color:#ffffff">$5,250</div>
<div class="t" style="left:248.8px;top:227.8px;font-size:12px;color:#c4c4c4">Sum of Selling Price</div>
<div class="a" style="left:8px;top:255.4px;width:1px;height:27px;background:#8a8a8a"></div>
<div class="t" style="left:16.8px;top:255.4px;font-size:12px;color:#ffffff">REF010</div>
<div class="t" style="left:16.8px;top:269.4px;font-size:12px;color:#c4c4c4">Reference</div>
<div class="t" style="left:132.7px;top:255.4px;font-size:12px;color:#ffffff">Protective Gloves</div>
<div class="t" style="left:132.7px;top:269.4px;font-size:12px;color:#c4c4c4">First Designation</div>
<div class="t" style="left:248.8px;top:255.4px;font-size:12px;color:#ffffff">$3,600</div>
<div class="t" style="left:248.8px;top:269.4px;font-size:12px;color:#c4c4c4">Sum of Selling Price</div>
<div class="a" style="left:8px;top:297.0px;width:1px;height:27px;background:#8a8a8a"></div>
<div class="t" style="left:16.8px;top:297.0px;font-size:12px;color:#ffffff">REF004</div>
<div class="t" style="left:16.8px;top:311.0px;font-size:12px;color:#c4c4c4">Reference</div>
<div class="t" style="left:132.7px;top:297.0px;font-size:12px;color:#ffffff">Motor Oil</div>
<div class="t" style="left:132.7px;top:311.0px;font-size:12px;color:#c4c4c4">First Designation</div>
<div class="t" style="left:248.8px;top:297.0px;font-size:12px;color:#ffffff">$3,000</div>
<div class="t" style="left:248.8px;top:311.0px;font-size:12px;color:#c4c4c4">Sum of Selling Price</div>
</div>
<div class="a" style="left:1031.5px;top:345.5px;width:3.5px;height:185px;background:#6a6a6a;border-radius:2px"></div>
<div class="a" style="left:1106px;top:104px;width:170px;height:642px;background:#141414;"></div>
<div class="a" style="left:1275px;top:104px;width:2px;height:642px;background:#3a3a3a;"></div>
<div class="t" style="left:1114.2px;top:117.7px;font-size:13.8px;color:#ffffff;font-weight:bold;">Visualizations</div>
<svg style="left:1258px;top:118px;" width="9" height="9" viewBox="0 0 9 9"><path d="M0.8 0.8L4 4.5 0.8 8.2M4.3 0.8L7.5 4.5 4.3 8.2" fill="none" stroke="#f0f0f0" stroke-width="1.4"/></svg>
<div class="t" style="left:1114.2px;top:143.3px;font-size:10.4px;color:#ffffff;font-weight:bold;">Build visual</div>
<div class="a" style="left:1114px;top:158px;width:30px;height:30px;background:#2a2a2a;border-radius:2px"></div>
<svg style="left:1117px;top:161px;" width="24" height="24" viewBox="0 0 24 24"><path d="M2 1.5h17" stroke="#c8c8c8" stroke-width="1"/><rect x="1.5" y="5" width="18" height="7" fill="#1fae90" stroke="#d0d0d0" stroke-width="0.8" stroke-dasharray="1.2 1"/><rect x="1.5" y="14" width="18" height="7" fill="#1fae90" stroke="#d0d0d0" stroke-width="0.8" stroke-dasharray="1.2 1"/></svg>
<svg style="left:1179px;top:162px;" width="24" height="23" viewBox="0 0 24 23"><path d="M11 22H1V0.6h9.5l5 5V9" fill="none" stroke="#d8d8d8" stroke-width="1.1"/><path d="M10.5 0.6v5h5" fill="#f0f0f0" stroke="#d8d8d8" stroke-width="1"/><path d="M22.5 8.5L14 17" stroke="#d8d8d8" stroke-width="1.6"/><path d="M13.5 16.5c-2 0-3 1.5-3 3s-1 2-2.5 2.2c3 1 6.5 0 6.5-3.5z" fill="none" stroke="#d8d8d8" stroke-width="1"/></svg>
<svg style="left:1106px;top:190px;" width="170" height="12" viewBox="0 0 170 12"><path d="M0 9.6H15L22 3.5 29 9.6H170" fill="none" stroke="#5a5a5a" stroke-width="1.2"/></svg>
<svg style="left:1116.5px;top:210.8px;" width="17" height="17" viewBox="0 0 17 17"><path d="M0.6 0v16.4H17" fill="none" stroke="#b8b8b8" stroke-width="1.2"/><rect x="2.5" y="1.5" width="8" height="3.5" fill="none" stroke="#b8b8b8" stroke-width="0.9"/><rect x="6" y="1.8" width="4.3" height="3" fill="#2b7bd6"/><rect x="2.5" y="8" width="12" height="3.5" fill="#7a7a7a" stroke="#b8b8b8" stroke-width="0.9"/><path d="M2.5 13.5h6" stroke="#b8b8b8" stroke-width="0.9"/></svg>
<svg style="left:1142.8px;top:210.8px;" width="17" height="17" viewBox="0 0 17 17"><path d="M0 16.4H17" stroke="#b8b8b8" stroke-width="1.2"/><path d="M0.6 0v16.4" stroke="#b8b8b8" stroke-width="1.2"/><rect x="3.5" y="2" width="4" height="14" fill="none" stroke="#b8b8b8" stroke-width="0.9"/><rect x="3.8" y="6" width="3.4" height="5" fill="#2b7bd6"/><rect x="11" y="1.5" width="4" height="14.5" fill="#7a7a7a" stroke="#b8b8b8" stroke-width="0.9"/></svg>
<svg style="left:1169px;top:210.8px;" width="17" height="17" viewBox="0 0 17 17"><path d="M0.6 0v16.4H17" fill="none" stroke="#b8b8b8" stroke-width="1.2"/><rect x="2" y="1" width="14" height="3.5" fill="#2b7bd6"/><rect x="2.5" y="6" width="6" height="3" fill="#7a7a7a" stroke="#b8b8b8" stroke-width="0.8"/><rect x="2.5" y="10" width="5" height="3" fill="#7a7a7a" stroke="#b8b8b8" stroke-width="0.8"/><rect x="2.5" y="13" width="10" height="2.5" fill="none" stroke="#b8b8b8" stroke-width="0.8"/></svg>
<svg style="left:1195.7px;top:210.8px;" width="17" height="17" viewBox="0 0 17 17"><path d="M0 16.4H17" stroke="#b8b8b8" stroke-width="1.2"/><path d="M0.6 0v16.4" stroke="#b8b8b8" stroke-width="1.2"/><rect x="2" y="0.5" width="3.5" height="15.5" fill="#2b7bd6"/><rect x="6.5" y="6" width="3" height="10" fill="#7a7a7a" stroke="#b8b8b8" stroke-width="0.8"/><rect x="10.5" y="9" width="3" height="7" fill="#7a7a7a" stroke="#b8b8b8" stroke-width="0.8"/><rect x="14" y="4" width="2.5" height="12" fill="none" stroke="#b8b8b8" stroke-width="0.8"/></svg>
<svg style="left:1222px;top:210.8px;" width="17" height="17" viewBox="0 0 17 17"><path d="M0.6 0v16.4H17" fill="none" stroke="#b8b8b8" stroke-width="1.2"/><rect x="2.5" y="2" width="13" height="3.5" fill="none" stroke="#b8b8b8" stroke-width="0.9"/><rect x="6" y="2.3" width="9.3" height="3" fill="#2b7bd6"/><rect x="2.5" y="9" width="13" height="3.5" fill="#7a7a7a" stroke="#b8b8b8" stroke-width="0.9"/></svg>
<svg style="left:1248.2px;top:210.8px;" width="17" height="17" viewBox="0 0 17 17"><path d="M0 16.4H17" stroke="#b8b8b8" stroke-width="1.2"/><path d="M0.6 0v16.4" stroke="#b8b8b8" stroke-width="1.2"/><rect x="3.5" y="1.5" width="4" height="14.5" fill="none" stroke="#b8b8b8" stroke-width="0.9"/><rect x="3.8" y="1.8" width="3.4" height="9" fill="#2b7bd6"/><rect x="11" y="1.5" width="4" height="14.5" fill="#7a7a7a" stroke="#b8b8b8" stroke-width="0.9"/></svg>
<svg style="left:1116.5px;top:236.7px;" width="17" height="17" viewBox="0 0 17 17"><path d="M0.6 0v16.4H17" fill="none" stroke="#b8b8b8" stroke-width="1.2"/><path d="M1 9l4.5-3.5 4 3 6-6" fill="none" stroke="#b8b8b8" stroke-width="1.1"/><path d="M1 13l5-6.5 4 3.5 5.5-5" fill="none" stroke="#2b7bd6" stroke-width="1.3"/></svg>
<svg style="left:1142.8px;top:236.7px;" width="17" height="17" viewBox="0 0 17 17"><path d="M0 16.4H17" stroke="#b8b8b8" stroke-width="1.2"/><path d="M0.5 16L6 3l4 6 4-7 2.5 14z" fill="#7a7a7a" stroke="#b8b8b8" stroke-width="1"/><path d="M0.5 16L5.5 10l4 3 3-5.5 4 8.5z" fill="#2b7bd6"/></svg>
<svg style="left:1169px;top:236.7px;" width="17" height="17" viewBox="0 0 17 17"><path d="M0.6 0v16.4H17" fill="none" stroke="#b8b8b8" stroke-width="1.2"/><path d="M1.5 2l4.5 6 5-6 5 5v5l-5-5-5 6-4.5-6z" fill="#2b7bd6"/></svg>
<svg style="left:1195.7px;top:236.7px;" width="17" height="17" viewBox="0 0 17 17"><path d="M0.6 0v16.4H17" fill="none" stroke="#b8b8b8" stroke-width="1.2"/><path d="M1.5 1h15.5v9l-3-3-5.5 5-7-5z" fill="#2b7bd6"/></svg>
<svg style="left:1222px;top:236.7px;" width="17" height="17" viewBox="0 0 17 17"><path d="M0 16.4H17" stroke="#b8b8b8" stroke-width="1.2"/><path d="M0.6 0v16.4" stroke="#b8b8b8" stroke-width="1.2"/><rect x="3" y="1" width="3.5" height="15" fill="none" stroke="#b8b8b8" stroke-width="0.9"/><rect x="3.3" y="3" width="2.9" height="6" fill="#2b7bd6"/><rect x="11" y="2" width="3.5" height="14" fill="#7a7a7a" stroke="#b8b8b8" stroke-width="0.9"/><path d="M1 15l5-5 4 3 6.5-6" fill="none" stroke="#e8e8e8" stroke-width="1"/></svg>
<svg style="left:1248.2px;top:236.7px;" width="17" height="17" viewBox="0 0 17 17"><path d="M0 16.4H17" stroke="#b8b8b8" stroke-width="1.2"/><path d="M0.6 0v16.4" stroke="#b8b8b8" stroke-width="1.2"/><rect x="3" y="7" width="3" height="9" fill="#2b7bd6"/><rect x="7" y="1" width="3" height="15" fill="none" stroke="#b8b8b8" stroke-width="0.9"/><rect x="11.5" y="4" width="3" height="12" fill="#7a7a7a" stroke="#b8b8b8" stroke-width="0.9"/><path d="M1 15l5-6 4 4 6.5-7" fill="none" stroke="#e8e8e8" stroke-width="1"/></svg>
<svg style="left:1116.5px;top:263.2px;" width="17" height="17" viewBox="0 0 17 17"><path d="M0.6 0v16.4H17" fill="none" stroke="#b8b8b8" stroke-width="1.2"/><path d="M1.5 2c3 3 5 4 7 2s5-3 8-1v5c-3-1-5 3-8 3s-5-4-7-3z" fill="#7a7a7a"/><path d="M1.5 7c3 1 4 5 7 4s5-4 8-3v3c-3 0-5 3-8 3s-4-3-7-3z" fill="#2b7bd6"/><path d="M1.5 11c3 0 4 3 7 3s5-3 8-2v3H1.5z" fill="#f0901a"/></svg>
<svg style="left:1142.8px;top:263.2px;" width="17" height="17" viewBox="0 0 17 17"><path d="M0 16.4H17" stroke="#b8b8b8" stroke-width="1.2"/><path d="M0.6 0v16.4" stroke="#b8b8b8" stroke-width="1.2"/><rect x="2.5" y="7" width="3.5" height="9" fill="none" stroke="#b8b8b8" stroke-width="0.9"/><rect x="7" y="4" width="3.5" height="12" fill="none" stroke="#b8b8b8" stroke-width="0.9"/><path d="M9 10h1.5" stroke="#2b7bd6" stroke-width="2"/><rect x="12" y="1" width="3.5" height="15" fill="none" stroke="#b8b8b8" stroke-width="0.9"/></svg>
<svg style="left:1169px;top:263.2px;" width="17" height="17" viewBox="0 0 17 17"><path d="M1 1h15v3.5H1z M3.5 5.5h10V9h-10z M5.5 10h6v3.5h-6z" fill="#2b7bd6" stroke="#e0e0e0" stroke-width="0.5"/><path d="M6.5 13.5h4v3h-4z" fill="#2b7bd6"/></svg>
<svg style="left:1195.7px;top:263.2px;" width="17" height="17" viewBox="0 0 17 17"><path d="M0.6 0v16.4H17" fill="none" stroke="#b8b8b8" stroke-width="1.2"/><rect x="4" y="3.5" width="2" height="2" fill="#2b7bd6"/><rect x="8" y="6.5" width="2" height="2" fill="#2b7bd6"/><rect x="13" y="1" width="2.2" height="2.2" fill="#e8e8e8"/><rect x="4" y="11" width="2.2" height="2.2" fill="#e8e8e8"/><rect x="12.5" y="10" width="2" height="2" fill="#2b7bd6"/></svg>
<svg style="left:1222px;top:263.2px;" width="17" height="17" viewBox="0 0 17 17"><circle cx="8.5" cy="8.5" r="7.8" fill="none" stroke="#b8b8b8" stroke-width="1.1"/><path d="M8.5 8.5V0.7a7.8 7.8 0 0 1 5.5 13.3z" fill="#2b7bd6"/></svg>
<svg style="left:1248.2px;top:263.2px;" width="17" height="17" viewBox="0 0 17 17"><circle cx="8.5" cy="8.5" r="6.3" fill="none" stroke="#2b7bd6" stroke-width="3.2"/><path d="M2.2 8.5A6.3 6.3 0 0 1 8.5 2.2" fill="none" stroke="#7a7a7a" stroke-width="3.2"/><circle cx="8.5" cy="8.5" r="8" fill="none" stroke="#b8b8b8" stroke-width="0.6"/></svg>
<svg style="left:1116.5px;top:289.2px;" width="17" height="17" viewBox="0 0 17 17"><rect x="0.6" y="0.6" width="15.8" height="16" fill="none" stroke="#b8b8b8" stroke-width="1.1"/><rect x="1.2" y="1.2" width="7" height="7" fill="#2b7bd6"/><rect x="1.2" y="9.5" width="7" height="6.5" fill="#2b7bd6"/><path d="M9 0.6v16M9 6h7.4M12.5 6v10.6M9 11h7.4" stroke="#b8b8b8" stroke-width="0.9"/></svg>
<svg style="left:1142.8px;top:289.2px;" width="17" height="17" viewBox="0 0 17 17"><circle cx="8.5" cy="8" r="6.5" fill="none" stroke="#b8b8b8" stroke-width="1.1"/><circle cx="8.5" cy="8" r="4.5" fill="#1a1a1a" stroke="#b8b8b8" stroke-width="0.8"/><path d="M6 6.5l2 1.5 2-1 1 2.5-2 2" fill="none" stroke="#3cc050" stroke-width="1.8"/><path d="M5 16.5h7M8.5 14.5v2" stroke="#b8b8b8" stroke-width="1.1"/></svg>
<svg style="left:1169px;top:289.2px;" width="17" height="17" viewBox="0 0 17 17"><path d="M1 3.5l3-2.5 3 1.5 3-1 4 1 2 2-1 5-3 5-5 0.5-3-2-2-4z" fill="#7a7a7a" stroke="#b8b8b8" stroke-width="0.9"/><path d="M2 3l3-1.5 2.5 2-1.5 5 3.5 1 6-3v2l-3 5-5 1-3-2z" fill="#2b7bd6"/></svg>
<svg style="left:1195.7px;top:289.2px;" width="17" height="17" viewBox="0 0 17 17"><path d="M10 0.5L16.5 17 10 12.5 1.5 15z" fill="#2b7bd6"/><path d="M10 0.5L10 12.5 1.5 15z" fill="#48a0e8"/></svg>
<svg style="left:1222px;top:289.2px;" width="17" height="17" viewBox="0 0 17 17"><path d="M1.5 13.5a7 7 0 0 1 14 0" fill="none" stroke="#b8b8b8" stroke-width="2.2"/><path d="M8.5 6.5a7 7 0 0 1 7 7" fill="none" stroke="#2b7bd6" stroke-width="2.2"/><path d="M8.5 13.5l3.5-3" stroke="#e8e8e8" stroke-width="1.3"/></svg>
<svg style="left:1248.2px;top:289.2px;" width="17" height="17" viewBox="0 0 17 17"><rect x="0.6" y="1.5" width="16" height="14" fill="none" stroke="#b8b8b8" stroke-width="1.1"/><text x="8.6" y="11.3" font-size="8" fill="#2b7bd6" text-anchor="middle" font-family="Liberation Sans">123</text><path d="M2 13.5h13" stroke="#7a7a7a"/></svg>
<svg style="left:1116.5px;top:315.6px;" width="17" height="17" viewBox="0 0 17 17"><rect x="0.6" y="0.6" width="16" height="16" fill="none" stroke="#b8b8b8" stroke-width="1.1"/><path d="M4.5 4.5h9M4.5 8.5h9M4.5 12.5h9" stroke="#2b7bd6" stroke-width="1.2"/><path d="M3 3v11" stroke="#b8b8b8" stroke-width="0.8"/></svg>
<svg style="left:1142.8px;top:315.6px;" width="17" height="17" viewBox="0 0 17 17"><rect x="0.6" y="1" width="16.5" height="14" fill="none" stroke="#b8b8b8" stroke-width="1.1"/><path d="M3.5 9.5l3-4.5 3 4.5z" fill="#3cc050"/><path d="M9.5 4.5h6l-3 4.5z" fill="#e84040"/><path d="M2.5 12h12.5" stroke="#b8b8b8" stroke-width="0.9"/></svg>
<svg style="left:1169px;top:315.6px;" width="17" height="17" viewBox="0 0 17 17"><rect x="0.6" y="0.6" width="15" height="15" fill="none" stroke="#b8b8b8" stroke-width="1.1"/><path d="M0.6 3.5h15" stroke="#b8b8b8"/><rect x="3" y="6" width="2.5" height="2.5" fill="none" stroke="#b8b8b8" stroke-width="0.8"/><rect x="3" y="10" width="2.5" height="2.5" fill="none" stroke="#b8b8b8" stroke-width="0.8"/><path d="M8.5 9.5h9l-3 4v3.5l-3-1.5v-2z" fill="#141414" stroke="#b8b8b8" stroke-width="1"/></svg>
<svg style="left:1195.7px;top:315.6px;" width="17" height="17" viewBox="0 0 17 17"><rect x="0.6" y="0.6" width="16" height="16" fill="none" stroke="#b8b8b8" stroke-width="1.1"/><path d="M0.6 4.5h16M0.6 8.5h16M0.6 12.5h16M5.8 4.5v12M11.2 4.5v12" stroke="#b8b8b8" stroke-width="0.9"/></svg>
<svg style="left:1222px;top:315.6px;" width="17" height="17" viewBox="0 0 17 17"><rect x="0.6" y="0.6" width="16" height="16" fill="none" stroke="#b8b8b8" stroke-width="1.1"/><path d="M0.6 4.5h16M0.6 8.5h16M5.8 4.5v12M11.2 0.6v16" stroke="#b8b8b8" stroke-width="0.9"/><rect x="11.6" y="5" width="4.6" height="11.2" fill="#2b7bd6"/><rect x="1" y="12.8" width="15.2" height="3.4" fill="#2b7bd6"/></svg>
<svg style="left:1248.2px;top:315.6px;" width="17" height="17" viewBox="0 0 17 17"><text x="8.5" y="15.5" font-size="16" fill="#2b7bd6" text-anchor="middle" font-family="Liberation Sans">R</text></svg>
<svg style="left:1116.5px;top:341.7px;" width="17" height="17" viewBox="0 0 17 17"><text x="8.5" y="15" font-size="15" fill="#2b7bd6" text-anchor="middle" font-family="Liberation Sans">Py</text></svg>
<svg style="left:1142.8px;top:341.7px;" width="17" height="17" viewBox="0 0 17 17"><path d="M0.6 0v16.4H17" fill="none" stroke="#b8b8b8" stroke-width="1.1"/><path d="M1 3h11M1 8h9M1 12h6" stroke="#b8b8b8" stroke-width="0.9"/><path d="M1 3h11" stroke="#2b7bd6" stroke-width="1"/><circle cx="14" cy="3" r="2" fill="none" stroke="#2b7bd6" stroke-width="1.3"/><circle cx="11" cy="8" r="1.3" fill="#b8b8b8"/><circle cx="8" cy="12" r="1.3" fill="#b8b8b8"/></svg>
<svg style="left:1169px;top:341.7px;" width="17" height="17" viewBox="0 0 17 17"><rect x="0.5" y="6.5" width="5" height="4" fill="#2b7bd6"/><rect x="11.5" y="0.6" width="5.5" height="4" fill="#2b7bd6"/><rect x="11.5" y="6.5" width="5.5" height="4" fill="#2b7bd6"/><rect x="11.5" y="12.4" width="5.5" height="4" fill="#2b7bd6"/><path d="M5.5 8.5h3M8.5 2.6v11.8M8.5 2.6h3M8.5 8.5h3M8.5 14.4h3" fill="none" stroke="#b8b8b8" stroke-width="1"/></svg>
<svg style="left:1195.7px;top:341.7px;" width="17" height="17" viewBox="0 0 17 17"><path d="M1 1h15.5v11H5.5l-3 3.5V12H1z" fill="none" stroke="#2b7bd6" stroke-width="1.2"/></svg>
<svg style="left:1222px;top:341.7px;" width="17" height="17" viewBox="0 0 17 17"><path d="M1.5 0.6h9l4.5 4.5v11.5H1.5z" fill="none" stroke="#b8b8b8" stroke-width="1.1"/><circle cx="4.5" cy="6" r="1.5" fill="#2b7bd6"/><path d="M7 6.5h5M5 10h6" stroke="#2b7bd6" stroke-width="1"/></svg>
<svg style="left:1248.2px;top:341.7px;" width="17" height="17" viewBox="0 0 17 17"><path d="M4 0.8h9v6a4.5 4.5 0 0 1-9 0z" fill="none" stroke="#b8b8b8" stroke-width="1.1"/><path d="M4 0.8h9v2.5H4z" fill="#2b7bd6"/><path d="M4 2.5H1c0 3 1 4.5 3 4.5M13 2.5h3c0 3-1 4.5-3 4.5M8.5 11.5v2" fill="none" stroke="#b8b8b8" stroke-width="1.1"/><path d="M4.5 14h8v2.5h-8z" fill="#2b7bd6"/></svg>
<svg style="left:1116.5px;top:367.8px;" width="17" height="17" viewBox="0 0 17 17"><path d="M1 0.6h9.5l5 5v11.8H1z" fill="none" stroke="#e0e0e0" stroke-width="1.2"/><path d="M4 15v-3.5M7.5 15v-5M11 15v-6.5" stroke="#e0e0e0" stroke-width="2"/></svg>
<svg style="left:1142.8px;top:367.8px;" width="17" height="17" viewBox="0 0 17 17"><rect x="2" y="4.5" width="15" height="11" fill="none" stroke="#b8b8b8" stroke-width="1"/><text x="10" y="13" font-size="7.5" fill="#2b7bd6" text-anchor="middle" font-family="Liberation Sans">123</text><path d="M6 0L1.5 7h3l-2 5L8 4.5H5l2.5-4.5z" fill="#f08c10"/></svg>
<svg style="left:1169px;top:367.8px;" width="17" height="17" viewBox="0 0 17 17"><rect x="8" y="0.6" width="5" height="5" fill="none" stroke="#b8b8b8" stroke-width="0.9"/><rect x="2" y="9" width="5" height="6" fill="none" stroke="#b8b8b8" stroke-width="0.9"/><path d="M8 8.5h9.5l-3.2 4v4.5l-3-1.5v-3z" fill="#141414" stroke="#b8b8b8" stroke-width="1"/><path d="M6 0L1.5 7h3l-2 5L8 4.5H5l2.5-4.5z" fill="#f08c10"/></svg>
<svg style="left:1195.7px;top:367.8px;" width="17" height="17" viewBox="0 0 17 17"><path d="M3 2h13v14H3z" fill="none" stroke="#2b7bd6" stroke-width="1.5"/><path d="M5 6c3 0 3 3 5 4s2 3 3 5" fill="none" stroke="#2b7bd6" stroke-width="1.6"/><path d="M1 0.5h4v4.5l-2 2-2-2z" fill="#f08c10"/><circle cx="15" cy="14" r="2.3" fill="#f08c10"/><circle cx="16.5" cy="9" r="1.2" fill="#f08c10"/></svg>
<svg style="left:1222px;top:367.8px;" width="17" height="17" viewBox="0 0 17 17"><path d="M6 1.5L1 8.5l5 7 5-7z M11 1.5L6 8.5l5 7 5-7z" fill="none" stroke="#8a3ab8" stroke-width="1.4"/></svg>
<svg style="left:1248.2px;top:367.8px;" width="17" height="17" viewBox="0 0 17 17"><path d="M1 1.5h8l6.5 7-6.5 7H1l6.5-7z" fill="none" stroke="#2b7bd6" stroke-width="1.4"/><path d="M5 1.5l6.5 7" stroke="#2b7bd6" stroke-width="1.2"/></svg>
<div class="a" style="left:1121px;top:401px;width:2px;height:2px;background:#e0e0e0;"></div>
<div class="a" style="left:1125px;top:401px;width:2px;height:2px;background:#e0e0e0;"></div>
<div class="a" style="left:1129px;top:401px;width:2px;height:2px;background:#e0e0e0;"></div>
<svg style="left:1110px;top:418px;" width="161" height="2" viewBox="0 0 161 2"><path d="M0 1H161" stroke="#a0a0a0" stroke-width="1" stroke-dasharray="2.5 2"/></svg>
<svg style="left:1116.5px;top:426px;" width="17" height="17" viewBox="0 0 17 17"><path d="M2 0.5h13" stroke="#a0a0a0" stroke-dasharray="1 0.6"/><rect x="0.5" y="4.5" width="16" height="8" rx="1" fill="#f0f0f0"/><rect x="2.5" y="5.5" width="12" height="6" fill="#5a90d0"/><path d="M1 16h1.5M5 16h7M14.5 16h1.5" stroke="#a0a0a0"/></svg>
<div class="a" style="left:1106px;top:450px;width:169px;height:1.6px;background:#6a6a6a;"></div>
<div class="t" style="left:1117.2px;top:462.6px;font-size:10.8px;color:#e8e8e8;font-weight:normal;">Values</div>
<div class="a" style="left:1110px;top:481px;width:160.5px;height:25.5px;background:transparent;border:1px dashed #6a6a6a;border-radius:3px"></div>
<div class="t" style="left:1120.3px;top:488.0px;font-size:11.2px;color:#e8e8e8;font-weight:normal;">Add data fields here</div>
<div class="t" style="left:1117.2px;top:518.5px;font-size:11px;color:#ffffff;font-weight:bold;">Drill through</div>
<div class="t" style="left:1117.2px;top:542.7px;font-size:11.2px;color:#e8e8e8;font-weight:normal;">Cross-report</div>
<div class="a" style="left:1225.5px;top:541.5px;width:29.5px;height:14.5px;background:transparent;border:1px solid #a0a0a0;border-radius:8px"></div>
<div class="a" style="left:1229px;top:545.3px;width:7px;height:7px;background:#b0b0b0;border-radius:50%"></div>
<div class="t" style="left:1237.5px;top:544.5px;font-size:8.5px;color:#a0a0a0;font-weight:normal;">Off</div>
<div class="t" style="left:1117.2px;top:567.7px;font-size:11.1px;color:#e8e8e8;font-weight:normal;">Keep all filters</div>
<div class="a" style="left:1225.5px;top:566px;width:29.5px;height:15px;background:#1fa58e;border-radius:8px"></div>
<div class="t" style="left:1229px;top:569.5px;font-size:8.5px;color:#0a3a32;font-weight:normal;">On</div>
<div class="a" style="left:1244px;top:570px;width:7px;height:7px;background:#141414;border-radius:50%"></div>
<div class="a" style="left:1110px;top:591px;width:160.5px;height:24px;background:#000000;border:1px dashed #6a6a6a;border-radius:3px"></div>
<div class="t" style="left:1118px;top:597.5px;font-size:11.5px;color:#f0f0f0;font-weight:normal;">Add drill-through fields here</div>
<div class="a" style="left:1277px;top:104px;width:168px;height:642px;background:#141414;"></div>
<div class="t" style="left:1284.2px;top:115.3px;font-size:14.3px;color:#ffffff;font-weight:bold;">Data</div>
<svg style="left:1429px;top:118px;" width="8" height="9" viewBox="0 0 8 9"><path d="M0.8 0.8L4 4.5 0.8 8.2M4.3 0.8L7.5 4.5 4.3 8.2" fill="none" stroke="#f0f0f0" stroke-width="1.4"/></svg>
<div class="a" style="left:1280.5px;top:147.5px;width:161.5px;height:21.5px;background:#1c1c1c;border:1px solid #5a5a5a;border-radius:4px"></div>
<svg style="left:1291.5px;top:151.5px;" width="14" height="14" viewBox="0 0 14 14"><circle cx="5.8" cy="5.8" r="4.8" fill="none" stroke="#c8c8c8" stroke-width="1.2"/><path d="M9.2 9.2L13 13" stroke="#c8c8c8" stroke-width="1.3"/></svg>
<div class="t" style="left:1312.3px;top:152.6px;font-size:12px;color:#a8a8a8;font-weight:normal;">Search</div>
<svg style="left:1290px;top:186px;" width="8" height="5" viewBox="0 0 8 5"><path d="M0.5 0.5l3.5 3.5 3.5-3.5" fill="none" stroke="#d8d8d8" stroke-width="1.1"/></svg>
<svg style="left:1303px;top:183px;" width="12" height="12" viewBox="0 0 12 12"><rect x="0.5" y="0.5" width="11" height="11" rx="1.5" fill="none" stroke="#d8d8d8"/><path d="M0.5 4h11M0.5 7.8h11M4 0.5v11M8 0.5v11" stroke="#d8d8d8" stroke-width="0.9"/></svg>
<div class="t" style="left:1320.3px;top:183.7px;font-size:11px;color:#e8e8e8;font-weight:normal;">Table1</div>
<div class="a" style="left:1317.5px;top:206.7px;width:11.5px;height:11.5px;background:transparent;border:1px solid #8e8e8e;border-radius:2px"></div>
<div class="t" style="left:1353.3px;top:206.6px;font-size:11.2px;color:#e8e8e8;font-weight:normal;">Alerte</div>
<div class="a" style="left:1317.5px;top:229.3px;width:11.5px;height:11.5px;background:transparent;border:1px solid #8e8e8e;border-radius:2px"></div>
<div class="t" style="left:1353.3px;top:229.2px;font-size:11.2px;color:#e8e8e8;font-weight:normal;">Category</div>
<div class="a" style="left:1317.5px;top:252.0px;width:11.5px;height:11.5px;background:transparent;border:1px solid #8e8e8e;border-radius:2px"></div>
<svg style="left:1337px;top:251.5px;" width="10" height="12" viewBox="0 0 10 12"><path d="M9 1.5V0.6H0.8L5.5 6 0.8 11.4H9v-0.9" fill="none" stroke="#d8d8d8" stroke-width="1.1"/></svg>
<div class="t" style="left:1353.3px;top:251.9px;font-size:11.2px;color:#e8e8e8;font-weight:normal;">Cumulative Va...</div>
<div class="a" style="left:1317.5px;top:274.6px;width:11.5px;height:11.5px;background:transparent;border:1px solid #8e8e8e;border-radius:2px"></div>
<svg style="left:1337px;top:274.1px;" width="10" height="12" viewBox="0 0 10 12"><path d="M9 1.5V0.6H0.8L5.5 6 0.8 11.4H9v-0.9" fill="none" stroke="#d8d8d8" stroke-width="1.1"/></svg>
<div class="t" style="left:1353.3px;top:274.5px;font-size:11.2px;color:#e8e8e8;font-weight:normal;">Current Stock</div>
<div class="a" style="left:1317.5px;top:297.2px;width:11.5px;height:11.5px;background:transparent;border:1px solid #8e8e8e;border-radius:2px"></div>
<svg style="left:1337px;top:296.7px;" width="10" height="12" viewBox="0 0 10 12"><path d="M9 1.5V0.6H0.8L5.5 6 0.8 11.4H9v-0.9" fill="none" stroke="#d8d8d8" stroke-width="1.1"/></svg>
<div class="t" style="left:1353.3px;top:297.1px;font-size:11.2px;color:#e8e8e8;font-weight:normal;">Current Stock ...</div>
<div class="a" style="left:1317.5px;top:319.8px;width:11.5px;height:11.5px;background:transparent;border:1px solid #8e8e8e;border-radius:2px"></div>
<svg style="left:1337px;top:319.3px;" width="10" height="12" viewBox="0 0 10 12"><path d="M9 1.5V0.6H0.8L5.5 6 0.8 11.4H9v-0.9" fill="none" stroke="#d8d8d8" stroke-width="1.1"/></svg>
<div class="t" style="left:1353.3px;top:319.7px;font-size:11.2px;color:#e8e8e8;font-weight:normal;">Current Stock ...</div>
<div class="a" style="left:1317.5px;top:342.5px;width:11.5px;height:11.5px;background:transparent;border:1px solid #8e8e8e;border-radius:2px"></div>
<svg style="left:1337px;top:342.0px;" width="10" height="12" viewBox="0 0 10 12"><path d="M9 1.5V0.6H0.8L5.5 6 0.8 11.4H9v-0.9" fill="none" stroke="#d8d8d8" stroke-width="1.1"/></svg>
<div class="t" style="left:1353.3px;top:342.4px;font-size:11.2px;color:#e8e8e8;font-weight:normal;">Current Value ...</div>
<div class="a" style="left:1317.5px;top:365.1px;width:11.5px;height:11.5px;background:transparent;border:1px solid #8e8e8e;border-radius:2px"></div>
<svg style="left:1307px;top:366.6px;" width="5" height="8" viewBox="0 0 5 8"><path d="M0.5 0.5L4 4 0.5 7.5" fill="none" stroke="#d8d8d8" stroke-width="1.1"/></svg>
<svg style="left:1336.5px;top:364.6px;" width="12" height="12" viewBox="0 0 12 12"><rect x="0.5" y="0.5" width="11" height="11" rx="2" fill="none" stroke="#d8d8d8"/><path d="M0.5 3.5h11" stroke="#d8d8d8"/><path d="M3 6h1M5.5 6h1M8 6h1M3 8.5h1M5.5 8.5h1M8 8.5h1" stroke="#d8d8d8"/></svg>
<div class="t" style="left:1353.3px;top:365.0px;font-size:11.2px;color:#e8e8e8;font-weight:normal;">Date</div>
<div class="a" style="left:1317.5px;top:387.7px;width:11.5px;height:11.5px;background:transparent;border:1px solid #8e8e8e;border-radius:2px"></div>
<svg style="left:1337px;top:387.2px;" width="10" height="12" viewBox="0 0 10 12"><path d="M9 1.5V0.6H0.8L5.5 6 0.8 11.4H9v-0.9" fill="none" stroke="#d8d8d8" stroke-width="1.1"/></svg>
<div class="t" style="left:1353.3px;top:387.6px;font-size:11.2px;color:#e8e8e8;font-weight:normal;">Delta</div>
<div class="a" style="left:1317.5px;top:410.4px;width:11.5px;height:11.5px;background:transparent;border:1px solid #8e8e8e;border-radius:2px"></div>
<div class="t" style="left:1353.3px;top:410.3px;font-size:11.2px;color:#e8e8e8;font-weight:normal;">Designation</div>
<div class="a" style="left:1317.5px;top:433.0px;width:11.5px;height:11.5px;background:transparent;border:1px solid #8e8e8e;border-radius:2px"></div>
<svg style="left:1337px;top:432.5px;" width="10" height="12" viewBox="0 0 10 12"><path d="M9 1.5V0.6H0.8L5.5 6 0.8 11.4H9v-0.9" fill="none" stroke="#d8d8d8" stroke-width="1.1"/></svg>
<div class="t" style="left:1353.3px;top:432.9px;font-size:11.2px;color:#e8e8e8;font-weight:normal;">Entry</div>
<div class="a" style="left:1317.5px;top:455.6px;width:11.5px;height:11.5px;background:transparent;border:1px solid #8e8e8e;border-radius:2px"></div>
<svg style="left:1337px;top:455.1px;" width="10" height="12" viewBox="0 0 10 12"><path d="M9 1.5V0.6H0.8L5.5 6 0.8 11.4H9v-0.9" fill="none" stroke="#d8d8d8" stroke-width="1.1"/></svg>
<div class="t" style="left:1353.3px;top:455.5px;font-size:11.2px;color:#e8e8e8;font-weight:normal;">Exit</div>
<div class="a" style="left:1317.5px;top:478.3px;width:11.5px;height:11.5px;background:transparent;border:1px solid #8e8e8e;border-radius:2px"></div>
<svg style="left:1337px;top:477.8px;" width="10" height="12" viewBox="0 0 10 12"><path d="M9 1.5V0.6H0.8L5.5 6 0.8 11.4H9v-0.9" fill="none" stroke="#d8d8d8" stroke-width="1.1"/></svg>
<div class="t" style="left:1353.3px;top:478.2px;font-size:11.2px;color:#e8e8e8;font-weight:normal;">ID</div>
<div class="a" style="left:1317.5px;top:500.9px;width:11.5px;height:11.5px;background:transparent;border:1px solid #8e8e8e;border-radius:2px"></div>
<svg style="left:1337px;top:500.4px;" width="10" height="12" viewBox="0 0 10 12"><path d="M9 1.5V0.6H0.8L5.5 6 0.8 11.4H9v-0.9" fill="none" stroke="#d8d8d8" stroke-width="1.1"/></svg>
<div class="t" style="left:1353.3px;top:500.8px;font-size:11.2px;color:#e8e8e8;font-weight:normal;">ID2</div>
<div class="a" style="left:1317.5px;top:523.5px;width:11.5px;height:11.5px;background:transparent;border:1px solid #8e8e8e;border-radius:2px"></div>
<svg style="left:1337px;top:523.0px;" width="10" height="12" viewBox="0 0 10 12"><path d="M9 1.5V0.6H0.8L5.5 6 0.8 11.4H9v-0.9" fill="none" stroke="#d8d8d8" stroke-width="1.1"/></svg>
<div class="t" style="left:1353.3px;top:523.4px;font-size:11.2px;color:#e8e8e8;font-weight:normal;">Initial Stock</div>
<div class="a" style="left:1317.5px;top:546.1px;width:11.5px;height:11.5px;background:transparent;border:1px solid #8e8e8e;border-radius:2px"></div>
<svg style="left:1307px;top:547.6px;" width="5" height="8" viewBox="0 0 5 8"><path d="M0.5 0.5L4 4 0.5 7.5" fill="none" stroke="#d8d8d8" stroke-width="1.1"/></svg>
<svg style="left:1336.5px;top:545.6px;" width="12" height="12" viewBox="0 0 12 12"><rect x="0.5" y="0.5" width="11" height="11" rx="2" fill="none" stroke="#d8d8d8"/><path d="M0.5 3.5h11" stroke="#d8d8d8"/><path d="M3 6h1M5.5 6h1M8 6h1M3 8.5h1M5.5 8.5h1M8 8.5h1" stroke="#d8d8d8"/></svg>
<div class="t" style="left:1353.3px;top:546.0px;font-size:11.2px;color:#e8e8e8;font-weight:normal;">Last Update D...</div>
<div class="a" style="left:1317.5px;top:568.8px;width:11.5px;height:11.5px;background:transparent;border:1px solid #8e8e8e;border-radius:2px"></div>
<div class="t" style="left:1353.3px;top:568.7px;font-size:11.2px;color:#e8e8e8;font-weight:normal;">Location</div>
<div class="a" style="left:1317.5px;top:591.4px;width:11.5px;height:11.5px;background:transparent;border:1px solid #8e8e8e;border-radius:2px"></div>
<div class="t" style="left:1353.3px;top:591.3px;font-size:11.2px;color:#e8e8e8;font-weight:normal;">Operations</div>
<div class="a" style="left:1317.5px;top:614.0px;width:11.5px;height:11.5px;background:transparent;border:1px solid #8e8e8e;border-radius:2px"></div>
<svg style="left:1337px;top:613.5px;" width="10" height="12" viewBox="0 0 10 12"><path d="M9 1.5V0.6H0.8L5.5 6 0.8 11.4H9v-0.9" fill="none" stroke="#d8d8d8" stroke-width="1.1"/></svg>
<div class="t" style="left:1353.3px;top:613.9px;font-size:11.2px;color:#e8e8e8;font-weight:normal;">Purchase Price</div>
<div class="a" style="left:1317.5px;top:636.7px;width:11.5px;height:11.5px;background:transparent;border:1px solid #8e8e8e;border-radius:2px"></div>
<svg style="left:1337px;top:636.2px;" width="10" height="12" viewBox="0 0 10 12"><path d="M9 1.5V0.6H0.8L5.5 6 0.8 11.4H9v-0.9" fill="none" stroke="#d8d8d8" stroke-width="1.1"/></svg>
<div class="t" style="left:1353.3px;top:636.6px;font-size:11.2px;color:#e8e8e8;font-weight:normal;">Quantity</div>
<div class="a" style="left:1317.5px;top:659.3px;width:11.5px;height:11.5px;background:transparent;border:1px solid #8e8e8e;border-radius:2px"></div>
<div class="t" style="left:1353.3px;top:659.2px;font-size:11.2px;color:#e8e8e8;font-weight:normal;">Reference</div>
<div class="a" style="left:1317.5px;top:681.9px;width:11.5px;height:11.5px;background:transparent;border:1px solid #8e8e8e;border-radius:2px"></div>
<svg style="left:1307px;top:683.4px;" width="5" height="8" viewBox="0 0 5 8"><path d="M0.5 0.5L4 4 0.5 7.5" fill="none" stroke="#d8d8d8" stroke-width="1.1"/></svg>
<svg style="left:1336.5px;top:681.4px;" width="12" height="12" viewBox="0 0 12 12"><rect x="0.5" y="0.5" width="11" height="11" rx="2" fill="none" stroke="#d8d8d8"/><path d="M0.5 3.5h11" stroke="#d8d8d8"/><path d="M3 6h1M5.5 6h1M8 6h1M3 8.5h1M5.5 8.5h1M8 8.5h1" stroke="#d8d8d8"/></svg>
<div class="t" style="left:1353.3px;top:681.8px;font-size:11.2px;color:#e8e8e8;font-weight:normal;">Reorder Level</div>
<div class="a" style="left:1317.5px;top:704.6px;width:11.5px;height:11.5px;background:transparent;border:1px solid #8e8e8e;border-radius:2px"></div>
<svg style="left:1307px;top:706.1px;" width="5" height="8" viewBox="0 0 5 8"><path d="M0.5 0.5L4 4 0.5 7.5" fill="none" stroke="#d8d8d8" stroke-width="1.1"/></svg>
<svg style="left:1336.5px;top:704.1px;" width="12" height="12" viewBox="0 0 12 12"><rect x="0.5" y="0.5" width="11" height="11" rx="2" fill="none" stroke="#d8d8d8"/><path d="M0.5 3.5h11" stroke="#d8d8d8"/><path d="M3 6h1M5.5 6h1M8 6h1M3 8.5h1M5.5 8.5h1M8 8.5h1" stroke="#d8d8d8"/></svg>
<div class="t" style="left:1353.3px;top:704.5px;font-size:11.2px;color:#e8e8e8;font-weight:normal;">Reorder Point</div>
<div class="a" style="left:1317.5px;top:727.2px;width:11.5px;height:11.5px;background:transparent;border:1px solid #8e8e8e;border-radius:2px"></div>
<svg style="left:1337px;top:726.7px;" width="10" height="12" viewBox="0 0 10 12"><path d="M9 1.5V0.6H0.8L5.5 6 0.8 11.4H9v-0.9" fill="none" stroke="#d8d8d8" stroke-width="1.1"/></svg>
<div class="t" style="left:1353.3px;top:727.1px;font-size:11.2px;color:#e8e8e8;font-weight:normal;">Selling Price</div>
<div class="a" style="left:1434.5px;top:176.5px;width:7px;height:450px;background:#3a3a3a;border-radius:1px"></div>
<div class="a" style="left:0px;top:746px;width:1445px;height:1px;background:#444444;"></div>
<div class="a" style="left:0px;top:747px;width:1445px;height:17px;background:#111111;"></div>
<div class="t" style="left:4px;top:752.1px;font-size:10.8px;color:#d6d6d6;font-weight:normal;">Page 2 of 3</div>
<div class="t" style="left:1246px;top:750.5px;font-size:12px;color:#e0e0e0;font-weight:bold;">-</div>
<div class="a" style="left:1256px;top:756px;width:93px;height:1px;background:#a0a0a0;"></div>
<div class="a" style="left:1290px;top:751px;width:4px;height:10px;background:#e0e0e0;"></div>
<div class="a" style="left:1302px;top:754px;width:1px;height:5px;background:#a0a0a0;"></div>
<div class="t" style="left:1352px;top:748.5px;font-size:15px;color:#e0e0e0;font-weight:bold;">+</div>
<div class="t" style="left:1375px;top:752.1px;font-size:10.8px;color:#d6d6d6;font-weight:normal;">80%</div>
<svg style="left:1414.5px;top:752.5px;" width="14" height="10" viewBox="0 0 14 10"><rect x="0.6" y="0.6" width="12.8" height="8.8" rx="2" fill="none" stroke="#d6d6d6" stroke-width="1.1"/><path d="M4 3L2.5 5 4 7M10 3l1.5 2L10 7" fill="none" stroke="#d6d6d6" stroke-width="1"/></svg>
</body></html>
